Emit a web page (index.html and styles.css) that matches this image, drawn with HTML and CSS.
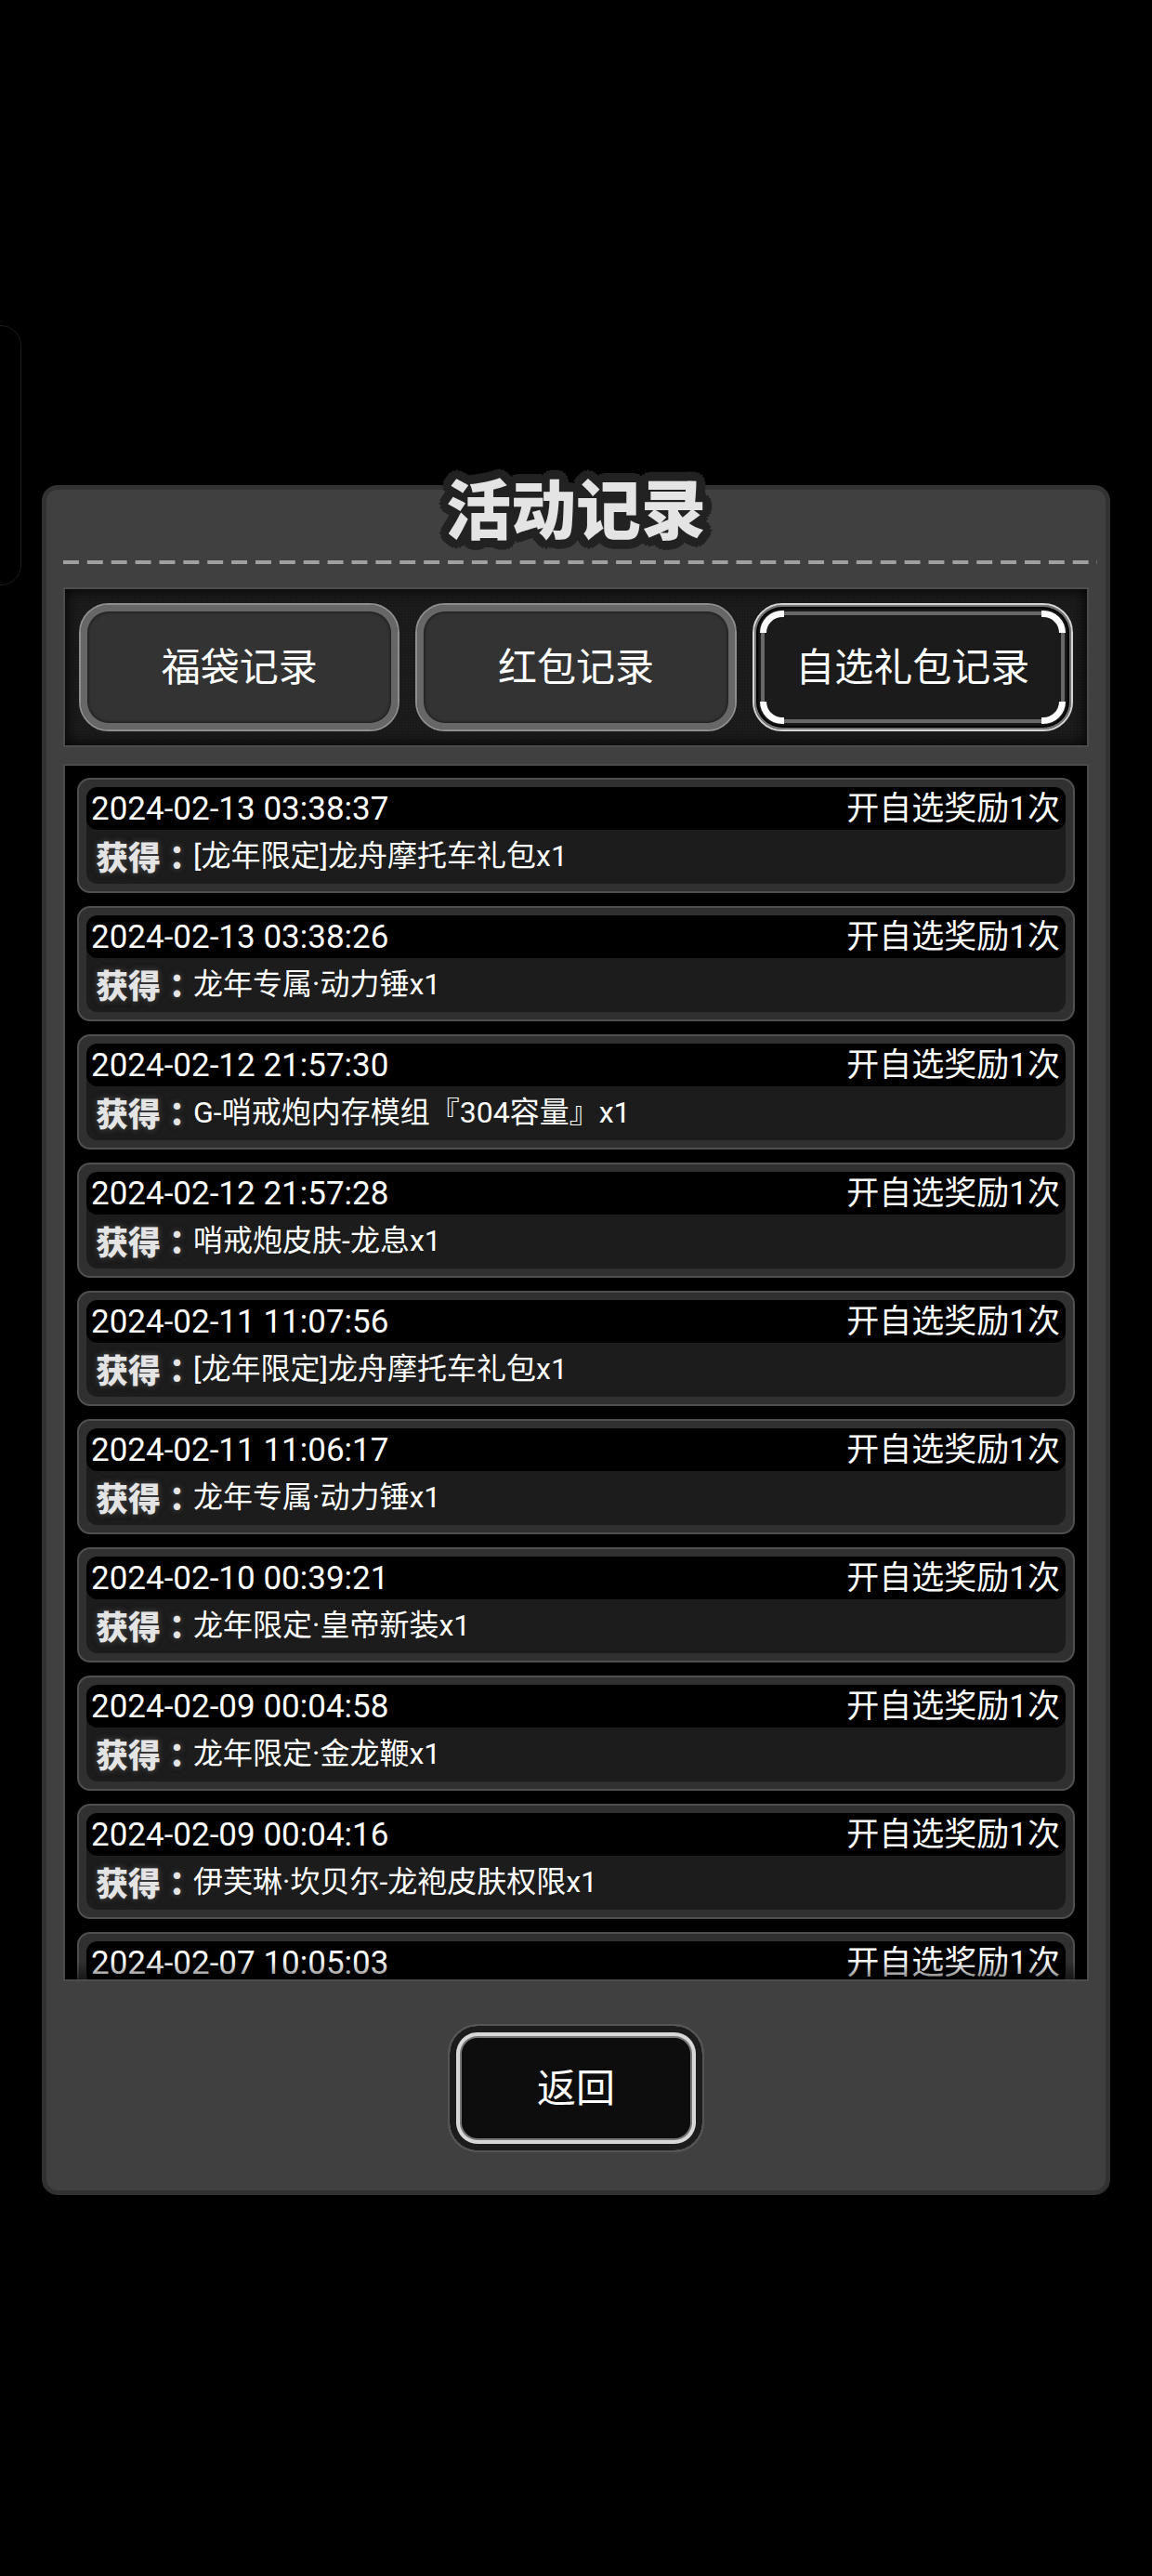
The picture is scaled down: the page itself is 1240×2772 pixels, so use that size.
FILE: index.html
```html
<!DOCTYPE html>
<html lang="zh-CN">
  <head>
    <meta charset="UTF-8" />
    <meta name="viewport" content="width=device-width, initial-scale=1" />
    <title>活动记录</title>
    <link rel="stylesheet" href="styles.css">
  </head>
  <body>
    <div class="side-handle"></div>

    <main class="panel">
      <h1>活动记录</h1>
      <div class="dashes"></div>

      <nav class="tabs">
        <button class="tab" type="button">福袋记录</button>
        <button class="tab" type="button">红包记录</button>
        <button class="tab active" type="button">
          自选礼包记录
          <span class="corner top-left"></span>
          <span class="corner top-right"></span>
          <span class="corner bottom-left"></span>
          <span class="corner bottom-right"></span>
        </button>
      </nav>

      <div class="list-box">
        <ul class="records" id="records"></ul>
      </div>

      <button class="back-button" type="button">返回</button>
    </main>

    <script src="script.js"></script>
  </body>
</html>
```

FILE: styles.css
```css
* {
  box-sizing: border-box;
}
body {
  margin: 0;
  height: 100vh;
  padding: 522px 45px 410px;
  display: flex;
  background-color: #000;
  color: #fff;
  font-family: Roboto, "Noto Sans CJK SC", sans-serif;
}
h1,
ul,
p {
  margin: 0;
  padding: 0;
}
button {
  color: #fff;
  font-family: inherit;
  font-size: 42px;
  line-height: 48px;
  cursor: pointer;
}
/* system side bar handle, hangs over the left edge */
.side-handle {
  position: absolute;
  top: 350px;
  left: -30px;
  width: 53px;
  height: 280px;
  border: 1px solid #1b1e1e;
  border-radius: 22px;
}
.panel {
  flex: 1;
  min-width: 0;
  display: flex;
  flex-direction: column;
  padding: 0 18px;
  background-color: #404040;
  border: 5px solid #323232;
  border-radius: 17px;
}
/* round outline, ten pixels out in every direction */
h1 {
  margin-top: -11px;
  text-align: center;
  font-size: 70px;
  line-height: 70px;
  font-weight: 900;
  color: #e4e4e4;
  text-shadow: 10px 0 #222, 9px 4px #222, 7px 7px #222, 4px 9px #222,
    0 10px #222, -4px 9px #222, -7px 7px #222, -9px 4px #222, -10px 0 #222,
    -9px -4px #222, -7px -7px #222, -4px -9px #222, 0 -10px #222,
    4px -9px #222, 7px -7px #222, 9px -4px #222, 5px 0 #222, 0 5px #222,
    -5px 0 #222, 0 -5px #222;
}
.dashes {
  height: 4px;
  margin: 17px -9px 25px 0;
  background-image: linear-gradient(90deg, #a0a0a0 66%, transparent 66%);
  background-size: 26px 4px;
  background-repeat: round;
}
.tabs {
  display: flex;
  gap: 17px;
  padding: 15px;
  border: 2px solid #4c4c4c;
  background-color: #1a1a1a;
  background-image: radial-gradient(#222 1px, transparent 1px);
  background-size: 3px 3px;
  box-shadow: inset 0 0 16px #000;
}
.tab {
  position: relative;
  flex: 1;
  height: 138px;
  padding: 2px 0 0;
  background-color: #333;
  border: 2px solid #8e8e8e;
  border-radius: 32px;
  box-shadow: inset 0 0 0 7px #676767, inset 0 0 3px 8px #1c1c1c;
}
.tab.active {
  background-color: #1b1b1b;
  border-color: #d4d4d4;
  box-shadow: inset 0 0 0 2px #737373, inset 0 0 2px 4px #000;
}
.tab.active::before {
  content: "";
  position: absolute;
  inset: 7px;
  border: 4px solid #686868;
  border-radius: 24px;
}
.corner {
  position: absolute;
  width: 26px;
  height: 24px;
  border: 0 solid #fff;
}
.top-left {
  top: 6px;
  left: 6px;
  border-width: 7px 0 0 7px;
  border-top-left-radius: 24px;
}
.top-right {
  top: 6px;
  right: 6px;
  border-width: 7px 7px 0 0;
  border-top-right-radius: 24px;
}
.bottom-left {
  bottom: 6px;
  left: 6px;
  border-width: 0 0 7px 7px;
  border-bottom-left-radius: 24px;
}
.bottom-right {
  bottom: 6px;
  right: 6px;
  border-width: 0 7px 7px 0;
  border-bottom-right-radius: 24px;
}
.list-box {
  position: relative;
  flex: 1;
  min-height: 0;
  margin-top: 18px;
  display: flex;
  border: 2px solid #4c4c4c;
  background-color: #000;
}
/* fade where the list is cut off */
.list-box::after {
  content: "";
  position: absolute;
  left: 0;
  right: 0;
  bottom: 0;
  height: 20px;
  background: linear-gradient(transparent, rgba(0, 0, 0, 0.5));
  pointer-events: none;
}
.records {
  flex: 1;
  overflow-y: auto;
  scrollbar-width: none;
  padding: 13px;
  list-style: none;
}
.record {
  padding: 8px;
  margin-bottom: 14px;
  background-color: #303030;
  border: 2px solid #505050;
  border-radius: 14px;
}
.record-inner {
  height: 104px;
  border-radius: 12px;
  background-color: #1c1c1c;
}
.record-head {
  display: flex;
  justify-content: space-between;
  height: 46px;
  padding: 0 6px 0 5px;
  border-radius: 12px;
  background-color: #000;
  font-size: 35px;
  line-height: 48px;
}
.record-body {
  display: flex;
  padding-left: 10px;
  font-size: 32px;
  line-height: 56px;
}
.label {
  font-size: 35px;
  font-weight: 900;
  color: #e4e4e4;
  text-shadow: 0 0 6px #3a3a3a, 0 0 6px #3a3a3a;
}
/* the TC face centres the full-width colon */
.colon {
  font-family: "Noto Sans CJK TC", sans-serif;
}
.back-button {
  align-self: center;
  width: 276px;
  height: 138px;
  margin: 46px 0 41px;
  padding: 2px 0 0;
  background-color: #0d0d0d;
  border: 2px solid #555;
  border-radius: 32px;
  box-shadow: inset 0 0 0 7px #1c1c1c, inset 0 0 0 11px #d8d8d8,
    inset 0 0 0 13px #777;
}
```

FILE: script.js
```javascript
const records = [
  ["2024-02-13 03:38:37", "[龙年限定]龙舟摩托车礼包x1"],
  ["2024-02-13 03:38:26", "龙年专属·动力锤x1"],
  ["2024-02-12 21:57:30", "G-哨戒炮内存模组『304容量』x1"],
  ["2024-02-12 21:57:28", "哨戒炮皮肤-龙息x1"],
  ["2024-02-11 11:07:56", "[龙年限定]龙舟摩托车礼包x1"],
  ["2024-02-11 11:06:17", "龙年专属·动力锤x1"],
  ["2024-02-10 00:39:21", "龙年限定·皇帝新装x1"],
  ["2024-02-09 00:04:58", "龙年限定·金龙鞭x1"],
  ["2024-02-09 00:04:16", "伊芙琳·坎贝尔-龙袍皮肤权限x1"],
  ["2024-02-07 10:05:03", ""],
];

document.getElementById("records").innerHTML = records
  .map(
    ([time, reward]) => `
      <li class="record">
        <div class="record-inner">
          <div class="record-head">
            <time>${time}</time>
            <span>开自选奖励1次</span>
          </div>
          ${
            reward
              ? `<p class="record-body"><span class="label">获得<span class="colon" lang="zh-TW">：</span></span>${reward}</p>`
              : ""
          }
        </div>
      </li>
    `
  )
  .join("");
```
